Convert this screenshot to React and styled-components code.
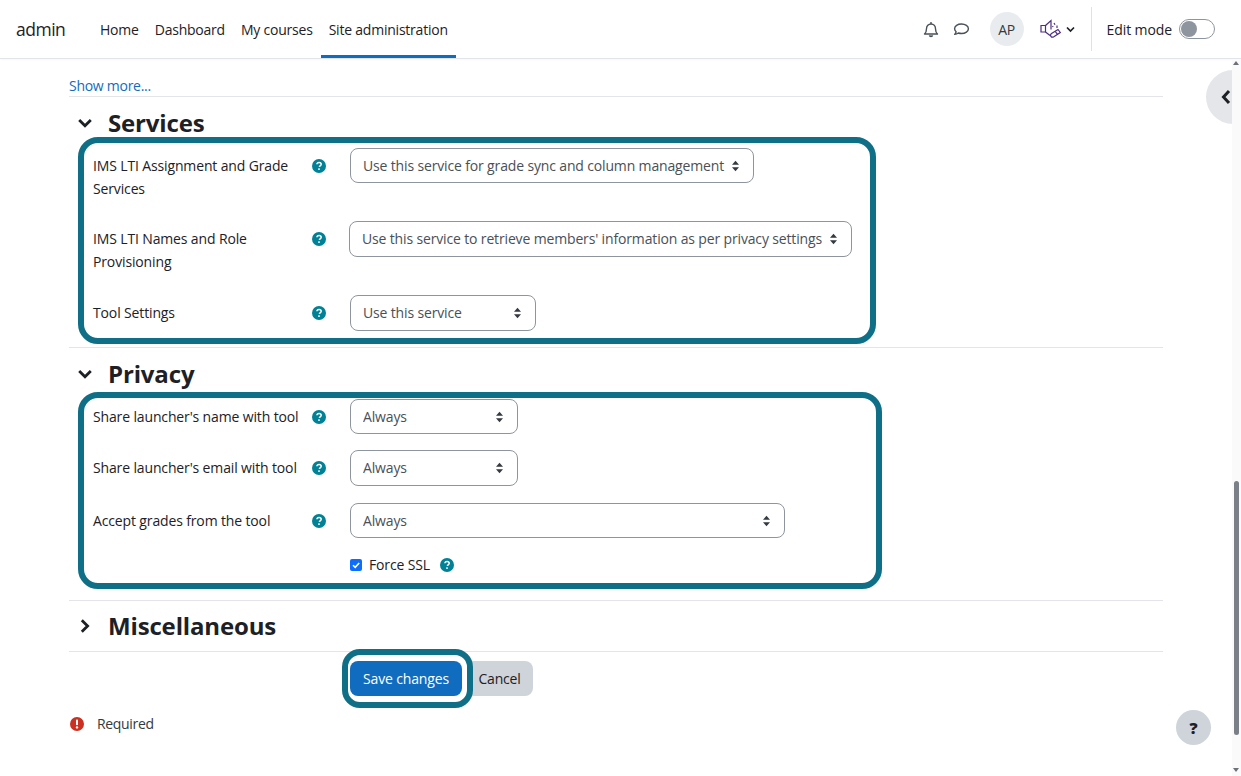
import styled, { createGlobalStyle } from 'styled-components';

const GlobalStyle = createGlobalStyle`
  html, body {
    margin: 0;
    padding: 0;
    height: 100%;
    overflow: hidden;
    background: #fff;
  }
  body {
    font-family: 'Open Sans', 'Noto Sans', sans-serif;
    color: #1d2125;
  }
`;

const caret = encodeURIComponent(
  "<svg xmlns='http://www.w3.org/2000/svg' width='7' height='12' viewBox='0 0 8 12'><path d='M4 0l4 4.6H0zM4 12L0 7.4h8z' fill='#343a40'/></svg>"
);

const Page = styled.div`
  width: 1241px;
  height: 776px;
  overflow: hidden;
  position: relative;
`;

const NavBar = styled.header`
  height: 58px;
  display: flex;
  align-items: stretch;
  border-bottom: 1px solid #e2e4e7;
  box-shadow: 0 1px 2px rgba(0, 0, 0, 0.03);
`;

const Brand = styled.div`
  font-size: 17.5px;
  letter-spacing: -0.5px;
  align-self: center;
  margin-left: 16px;
  width: 76px;
`;

const NavItem = styled.a`
  display: flex;
  align-items: center;
  padding: 0 8px;
  font-size: 14px;
  letter-spacing: -0.22px;
  color: #1d2125;
  border-bottom: 3px solid ${(p) => (p.$active ? '#0f6cbf' : 'transparent')};
  height: 58px;
  box-sizing: border-box;
  padding-top: 3px;
`;

const NavRight = styled.div`
  margin-left: auto;
  display: flex;
  align-items: center;
  padding-right: 26px;
`;

const IconSlot = styled.span`
  display: flex;
  color: #495057;
  margin-right: ${(p) => p.$gap || 0}px;
`;

const Avatar = styled.div`
  width: 34px;
  height: 34px;
  border-radius: 50%;
  background: #e9ecef;
  color: #343a40;
  display: flex;
  align-items: center;
  justify-content: center;
  font-size: 14px;
  letter-spacing: -0.3px;
  margin-right: 16px;
`;

const VDivider = styled.div`
  width: 1px;
  height: 44px;
  background: #dee2e6;
  margin: 0 15px 0 16px;
`;

const EditLabel = styled.span`
  font-size: 14px;
  letter-spacing: -0.1px;
  margin-right: 7px;
`;

const Toggle = styled.div`
  width: 32px;
  height: 16px;
  border: 1px solid #8f959e;
  border-radius: 10px;
  padding: 1px;
  display: flex;
  align-items: center;
  background: #fff;

  &::before {
    content: '';
    width: 16px;
    height: 16px;
    border-radius: 50%;
    background: #8f959e;
  }
`;

const Content = styled.main`
  margin: 0 78px 0 69px;
  padding-top: 17px;
`;

const ShowMore = styled.a`
  display: block;
  font-size: 14px;
  letter-spacing: -0.27px;
  line-height: 20px;
  color: #0f6cbf;
`;

const Rule = styled.hr`
  border: 0;
  height: 1px;
  margin: ${(p) => p.$top || 0}px 0 0;
  background: #e3e5e8;
`;

const SectionHead = styled.div`
  display: flex;
  align-items: center;
  box-sizing: border-box;
  height: ${(p) => p.$h}px;
  padding-left: 9px;
  padding-top: ${(p) => p.$drop || 0}px;
`;

const SectionTitle = styled.h3`
  margin: 0 0 0 16px;
  font-size: 24px;
  line-height: 30px;
  font-weight: 700;
  letter-spacing: -0.15px;
  color: #1d2125;
`;

const Highlight = styled.section`
  box-sizing: border-box;
  margin-left: 9px;
  width: ${(p) => p.$w}px;
  height: ${(p) => p.$h}px;
  border: 6px solid #0f6f86;
  border-radius: 20px;
  padding-left: 9px;
`;

const FormRow = styled.div`
  display: flex;
  align-items: flex-start;
  margin-top: ${(p) => p.$top}px;
`;

const Label = styled.label`
  width: 219px;
  font-size: 14px;
  letter-spacing: -0.14px;
  line-height: 22.5px;
  color: #1d2125;
  padding-top: 7px;
`;

const HelpSlot = styled.span`
  display: flex;
  width: 38px;
  padding-top: 11px;
`;

const HelpDot = styled.svg`
  width: 14px;
  height: 14px;
  display: block;
  flex: none;
`;

const Select = styled.select`
  appearance: none;
  box-sizing: border-box;
  width: ${(p) => p.$w}px;
  height: ${(p) => p.$h || 35}px;
  margin-left: ${(p) => p.$shift || 0}px;
  border: 1px solid #8f959e;
  border-radius: 8px;
  padding: 0 24px ${(p) => (p.$h ? 1 : 0)}px 12px;
  font-family: inherit;
  font-size: 14px;
  letter-spacing: -0.15px;
  color: #495057;
  background: #fff url("data:image/svg+xml,${caret}") no-repeat right 14px center;
`;

const CheckRow = styled.div`
  display: flex;
  align-items: center;
  margin: ${(p) => p.$top}px 0 0 257px;
  font-size: 14px;
  letter-spacing: -0.14px;
`;

const Check = styled.span`
  width: 12px;
  height: 12px;
  border-radius: 2px;
  background: #0d6efd;
  display: flex;
  align-items: center;
  justify-content: center;
  margin-right: 7px;
`;

const CheckText = styled.span`
  margin-right: 10px;
`;

const Actions = styled.div`
  display: flex;
  align-items: center;
  margin-top: -3px;
  padding-left: 273px;
`;

const SaveRing = styled.div`
  border: 6px solid #0f6f86;
  border-radius: 18px;
  padding: 6px 5px 6px 2px;
  display: flex;
  background: #fff;
  position: relative;
  z-index: 1;
`;

const SaveButton = styled.button`
  height: 35px;
  width: 112px;
  border: 0;
  border-radius: 8px;
  background: #0f6cbf;
  color: #fff;
  font-family: inherit;
  font-size: 14px;
  letter-spacing: -0.15px;
  padding: 0;
`;

const CancelButton = styled.button`
  height: 35px;
  width: 67px;
  border: 0;
  border-radius: 0 8px 8px 0;
  margin-left: -7px;
  background: #ced4da;
  color: #1d2125;
  font-family: inherit;
  font-size: 14px;
  letter-spacing: -0.2px;
  padding: 0;
`;

const RequiredRow = styled.div`
  display: flex;
  align-items: center;
  margin-top: 6px;
  font-size: 14px;
  letter-spacing: -0.33px;
  color: #343a40;
`;

const RequiredText = styled.span`
  margin-left: 12px;
`;

const DrawerTab = styled.div`
  position: absolute;
  left: 1206px;
  top: 70px;
  width: 54px;
  height: 54px;
  border-radius: 50%;
  background: #e4e6e9;
  display: flex;
  align-items: center;
  padding-left: 14px;
  box-sizing: border-box;
`;

const HelpFab = styled.div`
  position: absolute;
  left: 1176px;
  top: 710px;
  width: 35px;
  height: 35px;
  border-radius: 50%;
  background: #ced4da;
  display: flex;
  align-items: center;
  justify-content: center;
  font-size: 16px;
  font-weight: 800;
  color: #1d2125;
`;

const ScrollTrack = styled.div`
  position: absolute;
  right: 0;
  top: 59px;
  bottom: 0;
  width: 9px;
  background: #fafafa;
`;

const ScrollThumb = styled.div`
  position: absolute;
  left: 2px;
  top: 422px;
  width: 5px;
  height: 254px;
  border-radius: 3px;
  background: #7b8088;
`;

const ScrollArrow = styled.div`
  position: absolute;
  left: 1px;
  ${(p) => (p.$up ? 'top: 2px;' : 'bottom: 4px;')}
  width: 0;
  height: 0;
  border-left: 3.5px solid transparent;
  border-right: 3.5px solid transparent;
  ${(p) => (p.$up ? 'border-bottom' : 'border-top')}: 4px solid #6c7178;
`;

const Chevron = ({ dir }) => (
  <svg width="14" height="14" viewBox="0 0 14 14" fill="none">
    <path
      d={dir === 'right' ? 'M3.8 1.2l5.8 5.8-5.8 5.8' : 'M1.2 4l5.8 5.8L12.8 4'}
      stroke="#1d2125"
      strokeWidth="2.8"
    />
  </svg>
);

const Help = () => (
  <HelpDot viewBox="0 0 14 14">
    <circle cx="7" cy="7" r="7" fill="#008196" />
    <path
      d="M4.9 5.3c.1-1.2 1-1.9 2.2-1.9 1.2 0 2.1.7 2.1 1.8 0 .9-.6 1.3-1.1 1.6-.4.3-.6.5-.6 1v.2"
      fill="none"
      stroke="#fff"
      strokeWidth="1.5"
    />
    <rect x="6.2" y="9.3" width="1.6" height="1.6" fill="#fff" />
  </HelpDot>
);

const Bell = () => (
  <svg width="16" height="17" viewBox="0 0 16 17" fill="none" stroke="#495057" strokeWidth="1.4">
    <path d="M1.5 13c1.2-1 2-2.2 2-5.2C3.5 5 5.5 3 8 3s4.5 2 4.5 4.8c0 3 .8 4.2 2 5.2z" strokeLinejoin="round" />
    <path d="M8 1v2" />
    <path d="M6.3 14.5c.3.7.9 1 1.7 1s1.4-.3 1.7-1" fill="#495057" />
  </svg>
);

const Chat = () => (
  <svg width="17" height="15" viewBox="0 0 17 15" fill="none" stroke="#495057" strokeWidth="1.4">
    <path d="M8.5 2C4.6 2 1.6 4 1.6 6.8c0 1.2.6 2.2 1.5 3-.2 1-.8 1.9-1.4 2.6 1.4-.1 2.7-.7 3.6-1.4 1 .3 2 .5 3.2.5 3.9 0 6.9-2.1 6.9-4.7S12.4 2 8.5 2z" strokeLinejoin="round" />
  </svg>
);

const Megaphone = () => (
  <svg width="22" height="21" viewBox="0 0 22 21" fill="none" stroke="#4b2e83" strokeWidth="1.2">
    <path d="M1 6.5h4.5V13H1z" />
    <path d="M5.5 6.5L11 1.5v9M5.5 13l4.5 3.5" />
    <path d="M14 4l1 1.8M17 6.5V9M12.5 7l.6 1" />
    <path d="M11.5 14.5l6.5-4 2.3 3-6.5 4.3c-1 .6-2.3.4-2.9-.5-.6-.9-.4-2.200.6-2.800z" />
    <path d="M15.2 12.3l2.3 3" />
  </svg>
);

const services = [
  { label: 'IMS LTI Assignment and Grade Services', value: 'Use this service for grade sync and column management', w: 404, top: 5 },
  { label: 'IMS LTI Names and Role Provisioning', value: "Use this service to retrieve members' information as per privacy settings", w: 503, h: 36, shift: -1, top: 21 },
  { label: 'Tool Settings', value: 'Use this service', w: 186, h: 36, top: 22 },
];

const privacy = [
  { label: "Share launcher's name with tool", value: 'Always', w: 168, top: 1 },
  { label: "Share launcher's email with tool", value: 'Always', w: 168, h: 36, top: 16 },
  { label: 'Accept grades from the tool', value: 'Always', w: 435, top: 17 },
];

const Row = ({ label, value, w, h, shift, top }) => (
  <FormRow $top={top}>
    <Label>{label}</Label>
    <HelpSlot>
      <Help />
    </HelpSlot>
    <Select $w={w} $h={h} $shift={shift} defaultValue={value}>
      <option>{value}</option>
    </Select>
  </FormRow>
);

export default function App() {
  return (
    <Page>
      <GlobalStyle />
      <NavBar>
        <Brand>admin</Brand>
        <NavItem>Home</NavItem>
        <NavItem>Dashboard</NavItem>
        <NavItem>My courses</NavItem>
        <NavItem $active>Site administration</NavItem>
        <NavRight>
          <IconSlot $gap={14}><Bell /></IconSlot>
          <IconSlot $gap={20}><Chat /></IconSlot>
          <Avatar>AP</Avatar>
          <IconSlot $gap={4}><Megaphone /></IconSlot>
          <svg width="9" height="7" viewBox="0 0 9 7" fill="none">
            <path d="M1 1.5L4.500 5 8 1.5" stroke="#1d2125" strokeWidth="1.7" />
          </svg>
          <VDivider />
          <EditLabel>Edit mode</EditLabel>
          <Toggle />
        </NavRight>
      </NavBar>

      <Content>
        <ShowMore>Show more...</ShowMore>
        <Rule />
        <SectionHead $h={40} $drop={12}>
          <Chevron dir="down" />
          <SectionTitle>Services</SectionTitle>
        </SectionHead>
        <Highlight $w={798} $h={207}>
          {services.map((r) => <Row key={r.label} {...r} />)}
        </Highlight>
        <Rule $top={3} />
        <SectionHead $h={44} $drop={8}>
          <Chevron dir="down" />
          <SectionTitle>Privacy</SectionTitle>
        </SectionHead>
        <Highlight $w={804} $h={197}>
          {privacy.map((r) => <Row key={r.label} {...r} />)}
          <CheckRow $top={17}>
            <Check>
              <svg width="10" height="10" viewBox="0 0 10 10" fill="none">
                <path d="M2 5.2l2.2 2.2L8.2 3" stroke="#fff" strokeWidth="1.6" />
              </svg>
            </Check>
            <CheckText>Force SSL</CheckText>
            <Help />
          </CheckRow>
        </Highlight>
        <Rule $top={11} />
        <SectionHead $h={50}>
          <Chevron dir="right" />
          <SectionTitle>Miscellaneous</SectionTitle>
        </SectionHead>
        <Rule />
        <Actions>
          <SaveRing>
            <SaveButton>Save changes</SaveButton>
          </SaveRing>
          <CancelButton>Cancel</CancelButton>
        </Actions>
        <RequiredRow>
          <svg width="16" height="16" viewBox="0 0 16 16">
            <circle cx="8" cy="8" r="7" fill="#ca3120" />
            <rect x="7" y="3.5" width="2" height="5.8" rx="0.8" fill="#fff" />
            <circle cx="8" cy="11.4" r="1.2" fill="#fff" />
          </svg>
          <RequiredText>Required</RequiredText>
        </RequiredRow>
      </Content>

      <DrawerTab>
        <svg width="12" height="16" viewBox="0 0 12 16" fill="none">
          <path d="M9 2L3.5 8 9 14" stroke="#1d2125" strokeWidth="3" />
        </svg>
      </DrawerTab>
      <HelpFab>?</HelpFab>
      <ScrollTrack>
        <ScrollArrow $up />
        <ScrollThumb />
        <ScrollArrow />
      </ScrollTrack>
    </Page>
  );
}
